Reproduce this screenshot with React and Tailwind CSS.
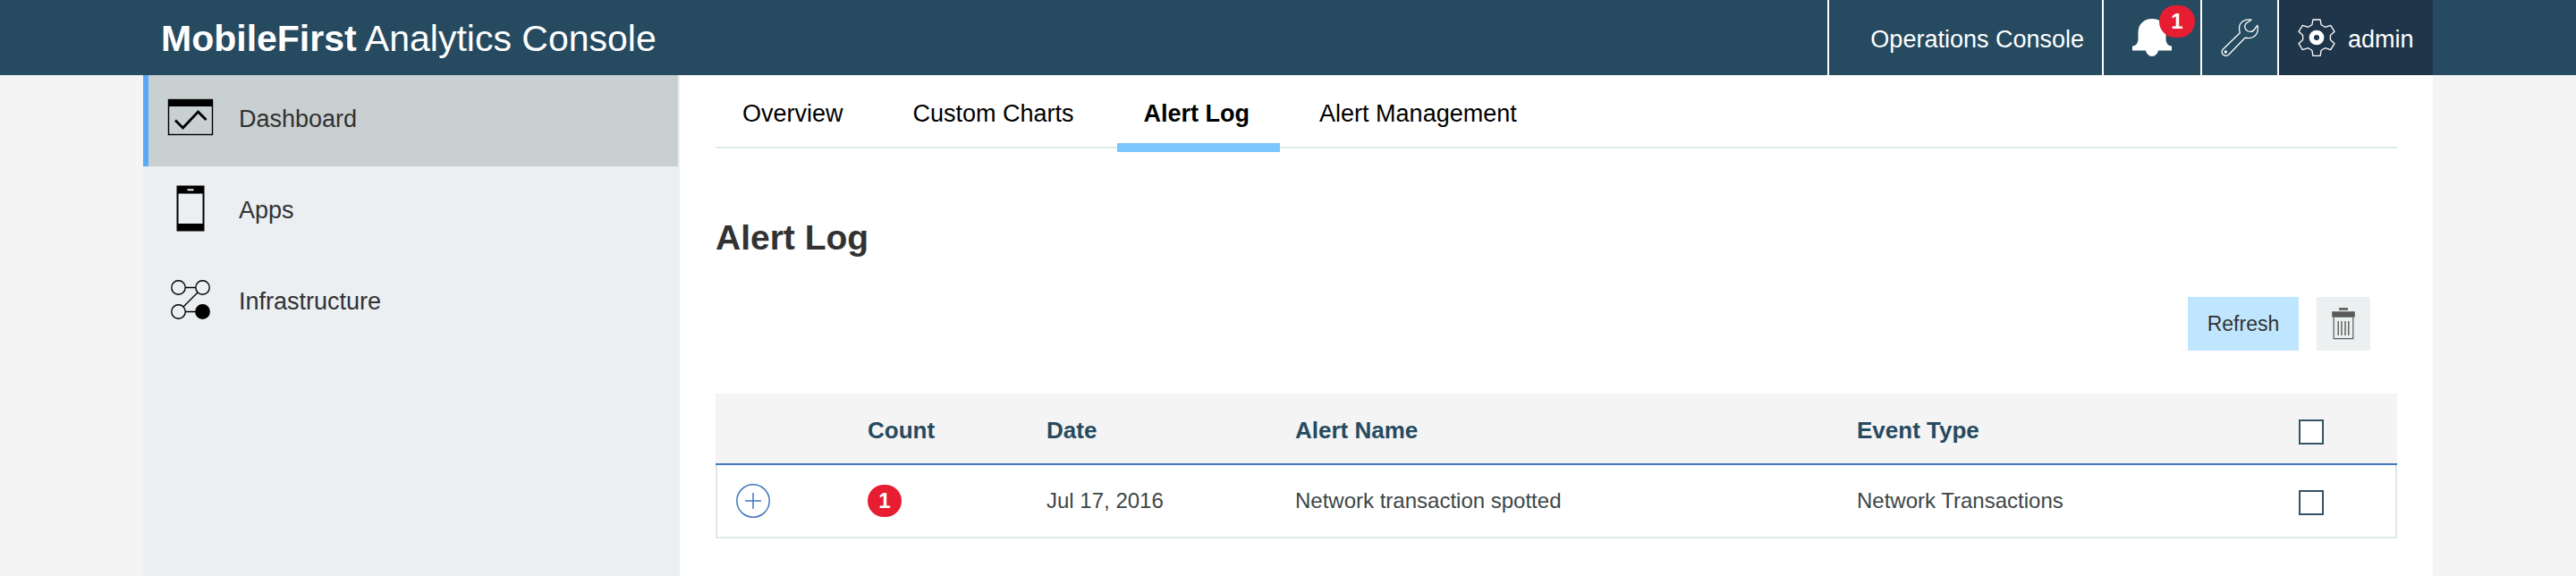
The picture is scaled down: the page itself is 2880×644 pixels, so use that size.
import { useState } from 'react';

function BellIcon() {
  return (
    <svg width="44" height="42" viewBox="0 0 44 42" fill="#fff" aria-hidden="true">
      <path d="M22 0c9 0 15.500 6 15.500 15v7c0 5 2 8 6.500 8.500V35.500H29c-.5 3.500-3.500 6.500-7 6.500s-6.500-3-7-6.500H0V30.500c4.500-.5 6.500-3.500 6.500-8.500v-7C6.500 6 13 0 22 0z" />
    </svg>
  );
}

function WrenchIcon() {
  return (
    <svg width="42" height="42" viewBox="0 0 42 42" fill="none" stroke="#fff" strokeWidth="1.3" strokeLinejoin="round" aria-hidden="true">
      <path d="M34 1.200C27-.5 20.500 4 20.500 10.500c0 2 .3 3.500.8 5.200L2.200 34.200a4.700 4.700 0 0 0 0 5.600 4.700 4.700 0 0 0 6.600.2L27 21.200c8 2 14.300-2.500 14.300-10.200 0-1.300-.1-2.500-.5-3.700L37 12.500c-1.500 2-4 2.300-6.500 1.500-4-1.800-5-6-2.200-9z" />
      <circle cx="5.300" cy="37" r="1" fill="#fff" />
    </svg>
  );
}

function GearIcon() {
  return (
    <svg width="42" height="42" viewBox="0 0 42 42" fill="none" stroke="#fff" strokeWidth="1.3" strokeLinejoin="round" aria-hidden="true">
      <path d="M16.900 1h8.200l1 5.700 4.400 2.600 6.200-2 4.300 7-4.600 4.100v5.200l4.600 4.100-4.300 7-6.200-2-4.400 2.600-1 6h-8.200l-1-6-4.400-2.600-6.200 2-4.300-7 4.600-4.100v-5.200L1 14.300l4.300-7 6.200 2 4.400-2.600z" />
      <circle cx="21" cy="21" r="5.700" strokeWidth="5.300" />
    </svg>
  );
}

function DashboardIcon() {
  return (
    <svg width="52" height="42" viewBox="0 0 52 42" fill="none" aria-hidden="true">
      <rect x="1.500" y="1.500" width="49" height="39" stroke="#000" strokeWidth="1.400" />
      <rect x="1" y="1" width="50" height="8" fill="#000" />
      <path d="M9 24.500l8.500 8.500 17-18 9 9" stroke="#000" strokeWidth="2.800" />
    </svg>
  );
}

function PhoneIcon() {
  return (
    <svg width="32" height="52" viewBox="0 0 32 52" aria-hidden="true">
      <path fillRule="evenodd" d="M.5.5h31v51H.5zM2.500 9.500v33.500h27V9.500zM12.500 4.300v2h7v-2z" />
    </svg>
  );
}

function NodesIcon() {
  return (
    <svg width="44" height="44" viewBox="0 0 44 44" fill="none" stroke="#000" strokeWidth="1.4" aria-hidden="true">
      <circle cx="8.500" cy="8.500" r="7.700" />
      <circle cx="35.500" cy="8.500" r="7.700" />
      <circle cx="8.500" cy="35.500" r="7.700" />
      <circle cx="35.500" cy="35.500" r="7.700" fill="#000" />
      <path d="M16.200 8.500h11.600M16.200 35.500h11.600M30 14L14 30" />
    </svg>
  );
}

function TrashIcon() {
  return (
    <svg width="26" height="36" viewBox="0 0 26 36" fill="none" stroke="#5a5a5a" aria-hidden="true">
      <path d="M8 1.500h10" strokeWidth="2.600" />
      <path d="M.2 7.500h25.600" strokeWidth="6.500" />
      <path d="M2.200 11v23.700h21.600V11" strokeWidth="1.200" />
      <path d="M7.200 15v16M11 15v16M15 15v16M18.800 15v16" strokeWidth="1.400" />
    </svg>
  );
}

const navItems = [
  { label: 'Dashboard', Icon: DashboardIcon },
  { label: 'Apps', Icon: PhoneIcon },
  { label: 'Infrastructure', Icon: NodesIcon },
];

const tabs = ['Overview', 'Custom Charts', 'Alert Log', 'Alert Management'];

const rows = [
  { count: 1, date: 'Jul 17, 2016', name: 'Network transaction spotted', type: 'Network Transactions' },
];

const checkbox =
  'mt-1 block size-7 appearance-none border-2 border-[#325468] bg-white checked:bg-[#264a60]';

export default function App() {
  const [selected, setSelected] = useState(false);

  return (
    <div className="flex min-h-screen flex-col bg-[#f4f4f4] font-['Liberation_Sans',Arial,sans-serif]">
      <header className="bg-[#264a60] px-40 text-[27px] text-white">
        <div className="flex h-[84px] items-stretch">
          <h1 className="flex flex-1 items-center pt-1 pl-5 text-[41px]">
            <span className="whitespace-pre"><strong>MobileFirst</strong> Analytics Console</span>
          </h1>
          <a href="#operations" className="flex items-center border-l-2 border-white pr-5 pl-[46px] pt-1">Operations Console</a>
          <button type="button" aria-label="Alerts" className="relative flex w-[110px] items-center justify-center border-l-2 border-white">
            <BellIcon />
            <span className="absolute top-1.5 right-1.5 flex h-9 w-10 items-center justify-center rounded-[20px] bg-[#e71d32] text-[24px] font-bold">1</span>
          </button>
          <button type="button" aria-label="Tools" className="flex w-[86px] items-center justify-center border-l-2 border-white">
            <WrenchIcon />
          </button>
          <button type="button" className="flex w-[174px] items-center gap-3.5 border-l-2 border-white bg-[#1f3549] pl-[21px]">
            <GearIcon />
            <span className="pt-1">admin</span>
          </button>
        </div>
      </header>

      <div className="flex flex-1 px-40">
        <nav className="w-[600px] shrink-0 bg-[#ebeff2] pr-0.5">
          {navItems.map(({ label, Icon }, i) => (
            <a
              key={label}
              href={`#${label.toLowerCase()}`}
              className={`flex h-[102px] items-center border-l-[6px] pb-2 pl-[21px] text-[27px] text-[#323232] ${
                i === 0 ? 'border-[#5aaafa] bg-[#c8d0d1]' : 'border-transparent'
              }`}
            >
              <span className="flex w-[52px] justify-center"><Icon /></span>
              <span className="pt-1 pl-7">{label}</span>
            </a>
          ))}
        </nav>

        <main className="min-w-0 flex-1 bg-white px-10">
          <div className="flex h-[82px] gap-3.5 border-b-2 border-[#dfe9e9] text-[27px] text-black">
            {tabs.map((tab) => (
              <a
                key={tab}
                href={`#${tab}`}
                className={`relative flex items-center pt-1.5 pr-[34px] pl-[30px] ${
                  tab === 'Alert Log'
                    ? 'font-bold after:absolute after:inset-x-0 after:-bottom-1.5 after:h-2.5 after:bg-[#7cc7ff]'
                    : ''
                }`}
              >
                {tab}
              </a>
            ))}
          </div>

          <h2 className="mt-[76px] text-[39px] leading-[48px] font-bold text-[#323232]">Alert Log</h2>

          <div className="mt-[42px] flex justify-end gap-5 pr-[30px]">
            <button type="button" className="h-[60px] w-[124px] bg-[#c0e6ff] text-[23px] text-[#323232]">Refresh</button>
            <button type="button" aria-label="Delete" className="flex size-[60px] items-center justify-center bg-[#eaf1f0]">
              <TrashIcon />
            </button>
          </div>

          <table className="mt-12 w-full table-fixed border-separate border-spacing-0 text-left text-[24px] text-[#3c4646]">
            <colgroup>
              <col className="w-[170px]" />
              <col className="w-[200px]" />
              <col className="w-[278px]" />
              <col />
              <col className="w-[494px]" />
              <col className="w-[110px]" />
            </colgroup>
            <thead className="bg-[#f4f4f4] text-[26px] text-[#264a60] [&_th]:h-20 [&_th]:border-b-2 [&_th]:border-[#4178be] [&_th]:p-0 [&_th]:pt-1">
              <tr>
                <th aria-label="Expand" />
                <th>Count</th>
                <th>Date</th>
                <th>Alert Name</th>
                <th>Event Type</th>
                <th>
                  <input type="checkbox" aria-label="Select all alerts" className={checkbox} checked={selected} onChange={() => setSelected(!selected)} />
                </th>
              </tr>
            </thead>
            <tbody className="[&_td]:h-[82px] [&_td]:border-b-2 [&_td]:border-[#dfe9e9] [&_td]:p-0">
              {rows.map((row) => (
                <tr key={row.name}>
                  <td className="border-l-2">
                    <button type="button" aria-label="Expand alert" className="ml-[21px] block">
                      <svg width="38" height="38" viewBox="0 0 38 38" fill="none" stroke="#4178be" strokeWidth="1.500" aria-hidden="true">
                        <circle cx="19" cy="19" r="18.200" />
                        <path d="M19 10v18M10 19h18" />
                      </svg>
                    </button>
                  </td>
                  <td>
                    <span className="flex h-9 w-[38px] items-center justify-center rounded-[20px] bg-[#e71d32] font-bold text-white">{row.count}</span>
                  </td>
                  <td>{row.date}</td>
                  <td>{row.name}</td>
                  <td>{row.type}</td>
                  <td className="border-r-2">
                    <input type="checkbox" aria-label={`Select ${row.name}`} className={checkbox} checked={selected} onChange={() => setSelected(!selected)} />
                  </td>
                </tr>
              ))}
            </tbody>
          </table>
        </main>
      </div>
    </div>
  );
}
